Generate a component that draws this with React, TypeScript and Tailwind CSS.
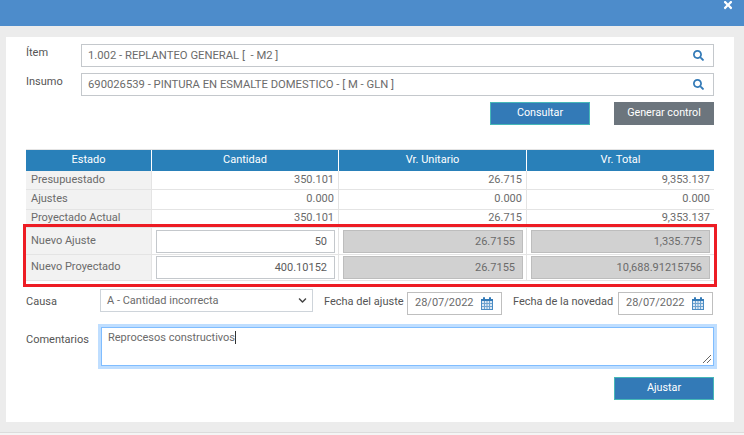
import { FaSearch, FaTimes, FaChevronDown } from 'react-icons/fa'

const font = { fontFamily: 'Roboto, sans-serif' }

function CalendarIcon() {
  return (
    <svg width="12" height="13" viewBox="0 0 12 13" className="shrink-0">
      <rect x="0.5" y="2.5" width="11" height="10" fill="#dbe8f4" stroke="#4a8cc4" />
      <rect x="0" y="2" width="12" height="2" fill="#337ab7" />
      <rect x="2" y="0" width="2" height="3" rx="1" fill="#337ab7" />
      <rect x="8" y="0" width="2" height="3" rx="1" fill="#337ab7" />
      <path d="M3.5 4v8M6 4v8M8.5 4v8M1 6.5h10M1 9.5h10" stroke="#6ea3d0" strokeWidth="1" fill="none" />
    </svg>
  )
}

function LookupRow(props: { label: string; value: string }) {
  return (
    <div className="flex items-start">
      <label className="w-[55px] pt-px text-[11px] leading-[16px] text-[#555]">{props.label}</label>
      <div className="flex h-[23px] flex-1 items-center justify-between border border-[#c4c8cc] pl-[6px] pr-[9px] text-[11.25px] text-[#6b6b6b]">
        <span className="whitespace-pre pt-px">{props.value}</span>
        <FaSearch size={11} className="text-[#337ab7]" />
      </div>
    </div>
  )
}

function StaticRow(props: { values: string[]; h: string }) {
  return (
    <div className={`grid grid-cols-[126px_187px_188px_187px] border-b border-[#e4e4e4] text-[11px] text-[#6b6b6b] ${props.h}`}>
      <div className="flex items-center border-r border-[#e4e4e4] bg-[#f2f2f2] pl-[5px]">{props.values[0]}</div>
      <div className="flex items-center justify-end border-r border-[#e4e4e4] pr-[4px]">{props.values[1]}</div>
      <div className="flex items-center justify-end border-r border-[#e4e4e4] pr-[4px]">{props.values[2]}</div>
      <div className="flex items-center justify-end pr-[4px]">{props.values[3]}</div>
    </div>
  )
}

function InputRow(props: { label: string; qty: string; unit: string; total: string; h: string; pt: string }) {
  const grey =
    'flex h-[23px] w-full items-center justify-end border border-[#bdbdbd] bg-[#d1d1d1] pr-[7px] pt-px text-[11px] text-[#6b6b6b]'
  return (
    <div className={`grid grid-cols-[126px_187px_188px_187px] border-b border-[#e4e4e4] text-[11px] text-[#6b6b6b] ${props.h}`}>
      <div className="flex items-center border-r border-[#e4e4e4] bg-[#f2f2f2] pl-[5px]">{props.label}</div>
      <div className={`border-r border-[#e4e4e4] pl-[4px] pr-[3px] ${props.pt}`}>
        <div className="flex h-[23px] w-full items-center justify-end border border-[#c4c8cc] bg-white pr-[7px] pt-px text-[#5c5c5c]">
          {props.qty}
        </div>
      </div>
      <div className={`border-r border-[#e4e4e4] pl-[4px] pr-[3px] ${props.pt}`}>
        <div className={grey}>{props.unit}</div>
      </div>
      <div className={`pl-[4px] pr-[4px] ${props.pt}`}>
        <div className={grey}>{props.total}</div>
      </div>
    </div>
  )
}

function DateField(props: { value: string; w: string }) {
  return (
    <div className={`flex h-[23px] items-center justify-between border border-[#bfbfbf] pl-[7px] pr-[8px] text-[11px] text-[#6b6b6b] ${props.w}`}>
      <span>{props.value}</span>
      <CalendarIcon />
    </div>
  )
}

export default function App() {
  return (
    <div className="h-[435px] w-[744px] overflow-hidden bg-[#ececec]" style={font}>
      {/* Cabecera */}
      <div className="flex h-[26px] justify-end bg-[#4d8ccb] pr-[10px] text-white">
        <FaTimes size={12} className="mt-[-1px]" />
      </div>

      <div className="ml-[6px] mt-[11px] h-[385px] w-[728px] bg-white pl-[20px] pr-[20px] pt-[7px]">
        <div className="flex flex-col gap-[6px]">
          <LookupRow label="Ítem" value="1.002 - REPLANTEO GENERAL [  - M2 ]" />
          <LookupRow label="Insumo" value="690026539 - PINTURA EN ESMALTE DOMESTICO - [ M - GLN ]" />
        </div>

        <div className="mt-[6px] flex justify-end gap-[24px] text-[10.75px] text-white">
          <button className="h-[23px] w-[100px] border border-[#46b8b8] bg-[#337ab7]">Consultar</button>
          <button className="h-[23px] w-[100px] bg-[#6c757d]">Generar control</button>
        </div>

        {/* Tabla de valores */}
        <div className="relative mt-[24px] border-t border-[#e4e4e4]">
          <div className="grid h-[21px] grid-cols-[126px_187px_188px_187px] bg-[#2980b9] text-[11px] text-white">
            <div className="flex items-center justify-center border-r border-white">Estado</div>
            <div className="flex items-center justify-center border-r border-white">Cantidad</div>
            <div className="flex items-center justify-center border-r border-white">Vr. Unitario</div>
            <div className="flex items-center justify-center">Vr. Total</div>
          </div>
          <StaticRow h="h-[19px]" values={['Presupuestado', '350.101', '26.715', '9,353.137']} />
          <StaticRow h="h-[20px]" values={['Ajustes', '0.000', '0.000', '0.000']} />
          <StaticRow h="h-[18px]" values={['Proyectado Actual', '350.101', '26.715', '9,353.137']} />
          <InputRow h="h-[27px]" pt="pt-[2px]" label="Nuevo Ajuste" qty="50" unit="26.7155" total="1,335.775" />
          <InputRow h="h-[26px]" pt="pt-[1px]" label="Nuevo Proyectado" qty="400.10152" unit="26.7155" total="10,688.91215756" />
          {/* Recuadro rojo sobre la tabla */}
          <div className="pointer-events-none absolute left-[-3px] top-[74px] h-[63px] w-[694px] border-[3px] border-[#ed1c24]" />
        </div>

        <div className="mt-[8px] flex items-start text-[11px] text-[#555]">
          <label className="w-[74px] pt-[5px]">Causa</label>
          <div className="flex h-[23px] w-[213px] items-center justify-between border border-[#ced4da] pl-[6px] pr-[5px] text-[#6b6b6b]">
            <span className="pt-px">A - Cantidad incorrecta</span>
            <FaChevronDown size={9} className="text-[#444]" />
          </div>
          <label className="ml-[11px] w-[83px] whitespace-nowrap pt-[5px]">Fecha del ajuste</label>
          <div className="pt-[3px]">
            <DateField value="28/07/2022" w="w-[95px]" />
          </div>
          <label className="ml-[11px] w-[105px] whitespace-nowrap pt-[5px]">Fecha de la novedad</label>
          <div className="pt-[3px]">
            <DateField value="28/07/2022" w="w-[95px]" />
          </div>
        </div>

        <div className="mt-[12px] flex items-start text-[11px]">
          <label className="w-[75px] pt-[5px] text-[#555]">Comentarios</label>
          <div className="relative h-[39px] w-[613px] border border-[#80bdff] pl-[6px] pt-[2px] text-[#6b6b6b] shadow-[0_0_0_3px_#bfdeff]">
            <span className="border-r border-[#333]">Reprocesos constructivos</span>
            <svg width="10" height="10" viewBox="0 0 10 10" className="absolute bottom-[1px] right-[1px]">
              <path d="M1 9L9 1M5 9L9 5" stroke="#666" strokeWidth="1" />
            </svg>
          </div>
        </div>

        <div className="mt-[11px] flex justify-end">
          <button className="h-[23px] w-[100px] border border-[#46b8b8] bg-[#337ab7] text-[10.75px] text-white">Ajustar</button>
        </div>
      </div>

      <div className="mt-[10px] h-[3px] border-t border-[#dcdcdc] bg-[#f5f5f5]" />
    </div>
  )
}
